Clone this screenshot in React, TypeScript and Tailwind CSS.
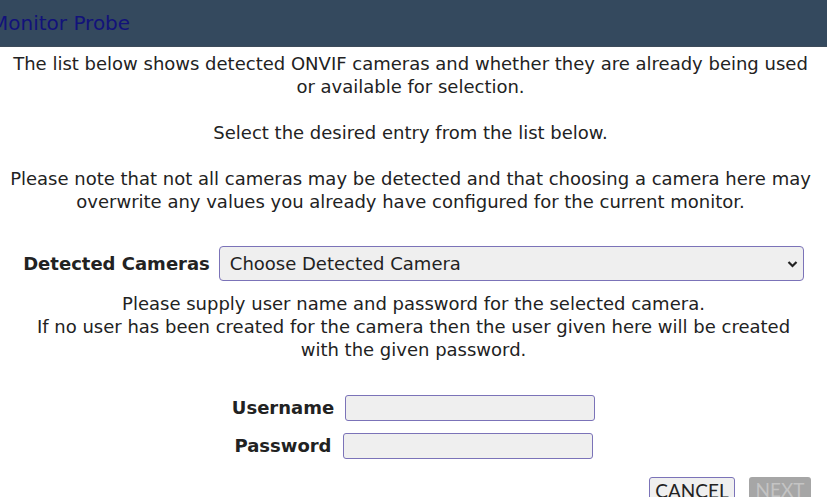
import React from "react";

const App = () => {
    return (
        <div className="w-[827px] h-[497px] overflow-hidden bg-white text-[#222] font-['DejaVu_Sans',Verdana,sans-serif]">
            <div className="h-[47px] bg-[#34495e] flex items-center -ml-[9px] border-b border-[#3d4b5a]">
                <span className="text-[20px] text-[#12127a]">Monitor Probe</span>
            </div>
            <div className="text-center text-[18px] leading-[23px] pt-[5px] pr-[6px]">
                <p>
                    The list below shows detected ONVIF cameras and whether they are already being used
                    <br />
                    or available for selection.
                </p>
                <br />
                <p>Select the desired entry from the list below.</p>
                <br />
                <p>
                    Please note that not all cameras may be detected and that choosing a camera here may
                    <br />
                    overwrite any values you already have configured for the current monitor.
                </p>
            </div>
            <div className="flex items-center justify-center mt-[33px] gap-[9px]">
                <label className="font-bold text-[18px]">Detected Cameras</label>
                <div className="relative w-[585px] h-[35px] rounded-[4px] border border-[#7b73b8] bg-[#efefef] flex items-center px-[10px]">
                    <span className="text-[18px]">Choose Detected Camera</span>
                    <svg className="absolute right-[5px] top-[13px]" width="11" height="8" viewBox="0 0 11 8">
                        <path d="M1.5 2 L5.5 6 L9.5 2" fill="none" stroke="#222" strokeWidth="2.2" />
                    </svg>
                </div>
            </div>
            <div className="text-center text-[18px] leading-[23px] mt-[11px]">
                Please supply user name and password for the selected camera.
                <br />
                If no user has been created for the camera then the user given here will be created
                <br />
                with the given password.
            </div>
            <div className="flex flex-col items-center mt-[33px] gap-[11px]">
                <div className="flex items-center gap-[11px]">
                    <label className="font-bold text-[18px]">Username</label>
                    <div className="w-[250px] h-[26px] rounded-[3px] border border-[#7b73b8] bg-[#efefef]" />
                </div>
                <div className="flex items-center gap-[11px]">
                    <label className="font-bold text-[18px]">Password</label>
                    <div className="w-[250px] h-[26px] rounded-[3px] border border-[#7b73b8] bg-[#efefef]" />
                </div>
            </div>
            <div className="flex justify-end gap-[14px] pr-[16px] mt-[18px] font-['Lato',sans-serif]">
                <button className="h-[26px] w-[86px] rounded-[3px] border border-[#7b73b8] bg-[#efefef] text-[19px] leading-[26px] text-[#222]">
                    CANCEL
                </button>
                <button className="h-[26px] w-[62px] rounded-[3px] bg-[#a6a6a6] text-[19px] leading-[26px] text-[#c4c4c4]">
                    NEXT
                </button>
            </div>
        </div>
    );
};

export default App;
